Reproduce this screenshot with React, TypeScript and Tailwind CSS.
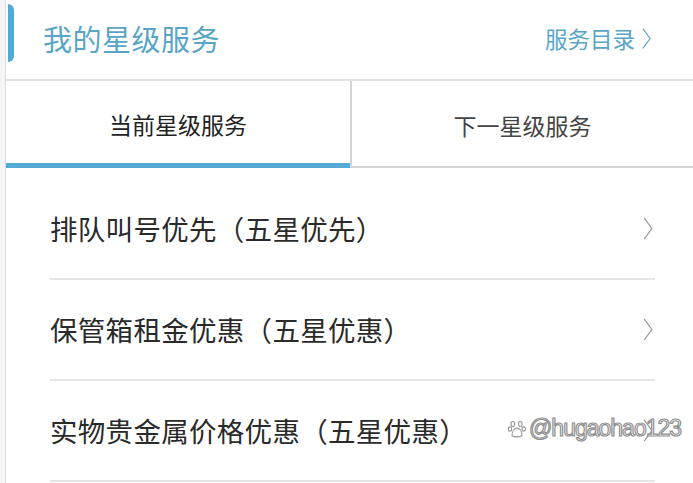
import React from 'react';

const FONT = { fontFamily: '"Noto Sans CJK SC", "Noto Sans", sans-serif' };

const ROWS = ['排队叫号优先（五星优先）', '保管箱租金优惠（五星优惠）', '实物贵金属价格优惠（五星优惠）'];

function Chevron({ className }: { className?: string }) {
  return (
    <svg viewBox="0 0 10 24" className={className} fill="none" stroke="currentColor" strokeWidth="1.3">
      <path d="M1 1 L9 12 L1 23" />
    </svg>
  );
}

function Paw() {
  return (
    <svg viewBox="0 0 24 24" className="w-[20px] h-[20px]" fill="none" stroke="#9a9a9a" strokeWidth="1.4">
      <ellipse cx="7" cy="6" rx="2.2" ry="3" />
      <ellipse cx="16" cy="6" rx="2.2" ry="3" />
      <ellipse cx="3.5" cy="12" rx="2" ry="2.6" />
      <ellipse cx="20" cy="12" rx="2" ry="2.6" />
      <path d="M6 20 C6 14 9 11 12 11 C15 11 18 14 18 20 C15 22 9 22 6 20 Z" />
    </svg>
  );
}

export default function App() {
  return (
    <div className="w-[693px] h-[483px] bg-white flex overflow-hidden relative" style={FONT}>
      {/* left page edge */}
      <div className="w-[6px] shrink-0 bg-[#f5f5f5] border-r border-[#dedede]" />

      <div className="flex-1 flex flex-col">
        {/* header */}
        <div className="h-[81px] shrink-0 flex items-center border-b-2 border-[#e2e2e2]">
          <div className="w-[6px] h-[58px] rounded-r-[6px] bg-[#52a9d6] ml-[2px] mb-[14px]" />
          <h1 className="ml-[29px] text-[29px] leading-none text-[#5aa5c5] tracking-[0.5px] mb-[3px]">我的星级服务</h1>
          <div className="ml-auto mr-[42px] flex items-center gap-[7px] text-[22.5px] leading-none text-[#5aa5c5] mb-[3px]">
            <span>服务目录</span>
            <Chevron className="w-[9px] h-[23px]" />
          </div>
        </div>

        {/* tabs */}
        <div className="h-[87px] shrink-0 flex">
          <div className="w-[344px] flex items-center justify-center border-b-[5px] border-[#55aad6] text-[23px] text-[#222] pt-[5px]">
            当前星级服务
          </div>
          <div className="flex-1 flex items-center justify-center border-l-2 border-b-2 border-[#d4d4d4] text-[23px] text-[#444] pt-[3px]">
            下一星级服务
          </div>
        </div>

        {/* list */}
        <div className="pt-[11px] ml-[44px] mr-[38px]">
          {ROWS.map((row) => (
            <div key={row} className="h-[101px] flex items-center justify-between border-b-2 border-[#e6e6e6]">
              <span className="text-[27.5px] text-[#2a2a2a] leading-none tracking-[0.3px]">{row}</span>
              <Chevron className="w-[10px] h-[23px] text-[#9b9b9b] mr-[2px]" />
            </div>
          ))}
        </div>
      </div>

      {/* watermark */}
      <div className="absolute left-[507px] top-[417px] flex items-center gap-[2px]">
        <Paw />
        <span
          className="text-[23px] leading-none text-white [-webkit-text-stroke:1.2px_#8f8f8f] tracking-[-1px]"
          style={{ fontFamily: '"Liberation Sans", sans-serif' }}
        >
          @hugaohao123
        </span>
      </div>
    </div>
  );
}
